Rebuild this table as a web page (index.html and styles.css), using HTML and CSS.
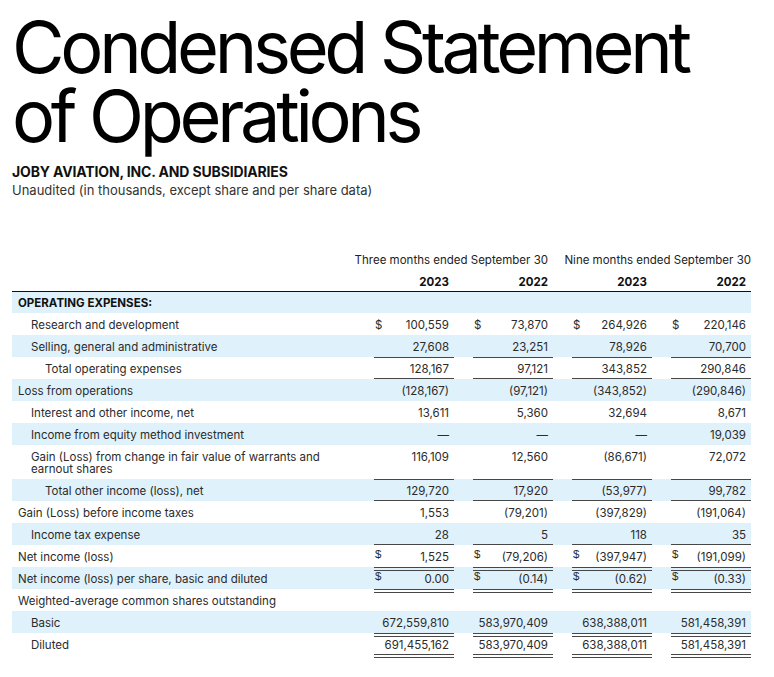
FILE: index.html
```html
<!DOCTYPE html>
<html lang="en">
<head>
<meta charset="utf-8">
<title>Condensed Statement of Operations</title>
<link rel="stylesheet" href="styles.css">
</head>
<body>
<main class="page">
  <h1 class="title"><span class="tline">Condensed Statement</span><span class="tline">of Operations</span></h1>
  <p class="company">JOBY AVIATION, INC. AND SUBSIDIARIES</p>
  <p class="note">Unaudited (in thousands, except share and per share data)</p>

  <table class="fin">
    <colgroup>
      <col class="c-label"><col class="c-val"><col class="c-gap"><col class="c-val"><col class="c-gap"><col class="c-val"><col class="c-gap"><col class="c-val">
    </colgroup>
    <thead>
      <tr class="periods">
        <th colspan="8"><div class="period-row"><span class="p3">Three months ended September 30</span><span class="p9">Nine months ended September 30</span></div></th>
      </tr>
      <tr class="years">
        <th></th><th class="yr">2023</th><th></th><th class="yr">2022</th><th></th><th class="yr">2023</th><th></th><th class="yr">2022</th>
      </tr>
    </thead>
    <tbody>
      <tr class="first">
        <td class="lbl sec">OPERATING EXPENSES:</td><td></td><td></td><td></td><td></td><td></td><td></td><td></td>
      </tr>
      <tr>
        <td class="lbl i1">Research and development</td>
        <td class="v"><div class="cell"><span class="cur">$</span><span class="num">100,559</span></div></td><td></td>
        <td class="v"><div class="cell"><span class="cur">$</span><span class="num">73,870</span></div></td><td></td>
        <td class="v"><div class="cell"><span class="cur">$</span><span class="num">264,926</span></div></td><td></td>
        <td class="v"><div class="cell"><span class="cur">$</span><span class="num">220,146</span></div></td>
      </tr>
      <tr>
        <td class="lbl i1">Selling, general and administrative</td>
        <td class="v"><div class="cell"><span class="num">27,608</span></div></td><td></td>
        <td class="v"><div class="cell"><span class="num">23,251</span></div></td><td></td>
        <td class="v"><div class="cell"><span class="num">78,926</span></div></td><td></td>
        <td class="v"><div class="cell"><span class="num">70,700</span></div></td>
      </tr>
      <tr>
        <td class="lbl i2">Total operating expenses</td>
        <td class="v st sb"><div class="cell"><span class="num">128,167</span></div></td><td></td>
        <td class="v st sb"><div class="cell"><span class="num">97,121</span></div></td><td></td>
        <td class="v st sb"><div class="cell"><span class="num">343,852</span></div></td><td></td>
        <td class="v st sb"><div class="cell"><span class="num">290,846</span></div></td>
      </tr>
      <tr>
        <td class="lbl">Loss from operations</td>
        <td class="v"><div class="cell"><span class="num">(128,167)</span></div></td><td></td>
        <td class="v"><div class="cell"><span class="num">(97,121)</span></div></td><td></td>
        <td class="v"><div class="cell"><span class="num">(343,852)</span></div></td><td></td>
        <td class="v"><div class="cell"><span class="num">(290,846)</span></div></td>
      </tr>
      <tr>
        <td class="lbl i1">Interest and other income, net</td>
        <td class="v"><div class="cell"><span class="num">13,611</span></div></td><td></td>
        <td class="v"><div class="cell"><span class="num">5,360</span></div></td><td></td>
        <td class="v"><div class="cell"><span class="num">32,694</span></div></td><td></td>
        <td class="v"><div class="cell"><span class="num">8,671</span></div></td>
      </tr>
      <tr>
        <td class="lbl i1">Income from equity method investment</td>
        <td class="v"><div class="cell"><span class="num">—</span></div></td><td></td>
        <td class="v"><div class="cell"><span class="num">—</span></div></td><td></td>
        <td class="v"><div class="cell"><span class="num">—</span></div></td><td></td>
        <td class="v"><div class="cell"><span class="num">19,039</span></div></td>
      </tr>
      <tr>
        <td class="lbl i1">Gain (Loss) from change in fair value of warrants and earnout shares</td>
        <td class="v"><div class="cell"><span class="num">116,109</span></div></td><td></td>
        <td class="v"><div class="cell"><span class="num">12,560</span></div></td><td></td>
        <td class="v"><div class="cell"><span class="num">(86,671)</span></div></td><td></td>
        <td class="v"><div class="cell"><span class="num">72,072</span></div></td>
      </tr>
      <tr>
        <td class="lbl i2">Total other income (loss), net</td>
        <td class="v st sb"><div class="cell"><span class="num">129,720</span></div></td><td></td>
        <td class="v st sb"><div class="cell"><span class="num">17,920</span></div></td><td></td>
        <td class="v st sb"><div class="cell"><span class="num">(53,977)</span></div></td><td></td>
        <td class="v st sb"><div class="cell"><span class="num">99,782</span></div></td>
      </tr>
      <tr>
        <td class="lbl">Gain (Loss) before income taxes</td>
        <td class="v"><div class="cell"><span class="num">1,553</span></div></td><td></td>
        <td class="v"><div class="cell"><span class="num">(79,201)</span></div></td><td></td>
        <td class="v"><div class="cell"><span class="num">(397,829)</span></div></td><td></td>
        <td class="v"><div class="cell"><span class="num">(191,064)</span></div></td>
      </tr>
      <tr>
        <td class="lbl i1">Income tax expense</td>
        <td class="v sb"><div class="cell"><span class="num">28</span></div></td><td></td>
        <td class="v sb"><div class="cell"><span class="num">5</span></div></td><td></td>
        <td class="v sb"><div class="cell"><span class="num">118</span></div></td><td></td>
        <td class="v sb"><div class="cell"><span class="num">35</span></div></td>
      </tr>
      <tr>
        <td class="lbl">Net income (loss)</td>
        <td class="v"><div class="cell"><span class="cur hi">$</span><span class="num">1,525</span></div></td><td></td>
        <td class="v"><div class="cell"><span class="cur hi">$</span><span class="num">(79,206)</span></div></td><td></td>
        <td class="v"><div class="cell"><span class="cur hi">$</span><span class="num">(397,947)</span></div></td><td></td>
        <td class="v"><div class="cell"><span class="cur hi">$</span><span class="num">(191,099)</span></div></td>
      </tr>
      <tr>
        <td class="lbl">Net income (loss) per share, basic and diluted</td>
        <td class="v dt"><div class="cell"><span class="cur hi">$</span><span class="num">0.00</span></div></td><td></td>
        <td class="v dt"><div class="cell"><span class="cur hi">$</span><span class="num">(0.14)</span></div></td><td></td>
        <td class="v dt"><div class="cell"><span class="cur hi">$</span><span class="num">(0.62)</span></div></td><td></td>
        <td class="v dt"><div class="cell"><span class="cur hi">$</span><span class="num">(0.33)</span></div></td>
      </tr>
      <tr>
        <td class="lbl">Weighted-average common shares outstanding</td>
        <td class="v dt"></td><td></td>
        <td class="v dt"></td><td></td>
        <td class="v dt"></td><td></td>
        <td class="v dt"></td>
      </tr>
      <tr>
        <td class="lbl i1">Basic</td>
        <td class="v"><div class="cell"><span class="num">672,559,810</span></div></td><td></td>
        <td class="v"><div class="cell"><span class="num">583,970,409</span></div></td><td></td>
        <td class="v"><div class="cell"><span class="num">638,388,011</span></div></td><td></td>
        <td class="v"><div class="cell"><span class="num">581,458,391</span></div></td>
      </tr>
      <tr class="last">
        <td class="lbl i1">Diluted</td>
        <td class="v dt db"><div class="cell"><span class="num">691,455,162</span></div></td><td></td>
        <td class="v dt db"><div class="cell"><span class="num">583,970,409</span></div></td><td></td>
        <td class="v dt db"><div class="cell"><span class="num">638,388,011</span></div></td><td></td>
        <td class="v dt db"><div class="cell"><span class="num">581,458,391</span></div></td>
      </tr>
    </tbody>
  </table>
</main>
</body>
</html>
```

FILE: styles.css
```css
* { box-sizing: border-box; }

html, body {
  margin: 0;
  background: #ffffff;
}

body {
  font-family: Inter, "Liberation Sans", sans-serif;
  color: #2b2b2b;
}

.page {
  padding: 12px 12px 0 12px;
}

.title {
  margin: 0;
  font-size: 72px;
  line-height: 69px;
  font-weight: 400;
  letter-spacing: -0.06em;
  color: #000;
}

.tline {
  display: block;
  height: 69px;
}

.company {
  margin: 13px 0 0;
  font-size: 14px;
  line-height: 17px;
  font-weight: 700;
  letter-spacing: -0.15px;
  color: #111;
}

.note {
  margin: 2px 0 0;
  font-size: 13px;
  line-height: 17px;
  color: #333;
}

.fin {
  margin-top: 50px;
  width: 739px;
  table-layout: fixed;
  border-collapse: separate;
  border-spacing: 0;
  font-size: 11.5px;
  line-height: 12px;
}

.c-label { width: 362px; }
.c-val { width: 80px; }
.c-gap { width: 19px; }

.fin th,
.fin td {
  padding: 0;
  font-weight: 400;
  text-align: left;
  vertical-align: top;
}

.periods th {
  padding: 5px 0 4px;
  color: #222;
}

.period-row {
  display: flex;
  justify-content: flex-end;
  white-space: nowrap;
}

.p3 {
  width: 250px;
  text-align: right;
}

.p9 {
  width: 203px;
  text-align: right;
}

.years th {
  padding: 6px 0 3px;
  border-bottom: 1px solid #111;
}

.years th.yr {
  font-weight: 700;
  text-align: right;
  padding-right: 5px;
  color: #111;
}

.fin tbody tr:nth-child(odd) {
  background: #dff1fb;
}

.fin tbody td {
  padding: 6px 0 4px;
}

.fin tbody tr.first td {
  padding-top: 5px;
}

.fin tbody tr.last td {
  padding-bottom: 7px;
}

.lbl {
  padding-left: 6px !important;
  padding-right: 20px !important;
}

.lbl.i1 { padding-left: 19px !important; }
.lbl.i2 { padding-left: 33px !important; }

.lbl.sec {
  font-weight: 700;
  color: #111;
}

.cell {
  display: flex;
  align-items: flex-start;
  padding-right: 5px;
  white-space: nowrap;
}

.cur {
  padding-left: 1px;
}

.cur.hi {
  font-family: "Liberation Sans", Arial, sans-serif;
  margin-top: -3px;
}

.num {
  margin-left: auto;
}

/* rule lines drawn inside the value cells */
.v.st {
  background: linear-gradient(#474747, #474747) left top / 100% 1px no-repeat;
}

.v.sb {
  background: linear-gradient(#474747, #474747) left bottom / 100% 1px no-repeat;
}

.v.st.sb {
  background:
    linear-gradient(#474747, #474747) left top / 100% 1px no-repeat,
    linear-gradient(#474747, #474747) left bottom / 100% 1px no-repeat;
}

.v.dt {
  background:
    linear-gradient(#474747, #474747) left 0 top 0 / 100% 1px no-repeat,
    linear-gradient(#474747, #474747) left 0 top 3px / 100% 1px no-repeat;
}

.v.dt.db {
  background:
    linear-gradient(#474747, #474747) left 0 top 0 / 100% 1px no-repeat,
    linear-gradient(#474747, #474747) left 0 top 3px / 100% 1px no-repeat,
    linear-gradient(#474747, #474747) left 0 bottom 0 / 100% 1px no-repeat,
    linear-gradient(#474747, #474747) left 0 bottom 3px / 100% 1px no-repeat;
}
```
